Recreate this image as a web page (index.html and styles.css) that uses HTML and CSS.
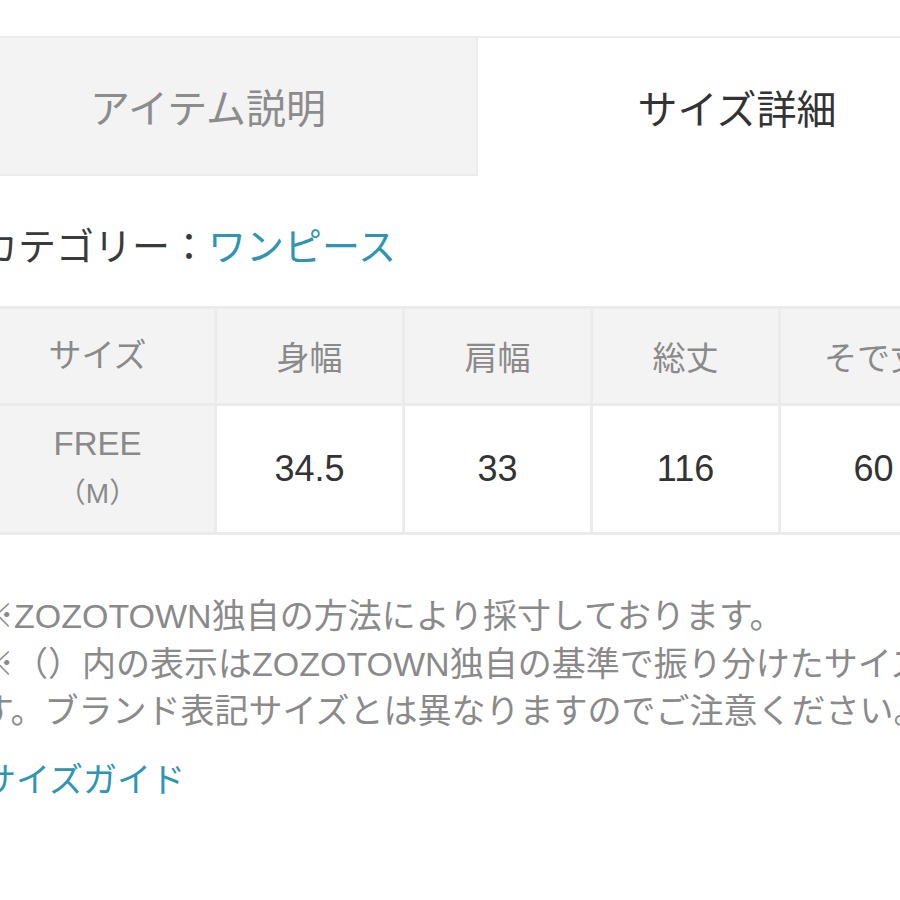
FILE: index.html
```html
<!DOCTYPE html>
<html lang="ja">

<head>
    <meta charset="UTF-8">
    <meta name="viewport" content="width=device-width, initial-scale=1.0">
    <title>サイズ詳細</title>
    <link rel="stylesheet" href="styles.css">
</head>

<body>
    <div class="page">
        <div class="tabs">
            <div class="tab">アイテム説明</div>
            <div class="tab active">サイズ詳細</div>
        </div>

        <div class="content">
            <p class="category">カテゴリー：<a href="#" class="link">ワンピース</a></p>

            <table class="size-table">
                <thead>
                    <tr>
                        <th class="col-size">サイズ</th>
                        <th>身幅</th>
                        <th>肩幅</th>
                        <th>総丈</th>
                        <th>そで丈</th>
                    </tr>
                </thead>
                <tbody>
                    <tr>
                        <th class="col-size">FREE<br><span class="sub">（M）</span></th>
                        <td>34.5</td>
                        <td>33</td>
                        <td>116</td>
                        <td>60</td>
                    </tr>
                </tbody>
            </table>

            <!-- measurement notes -->
            <p class="notes">
                ※ZOZOTOWN独自の方法により採寸しております。<br>
                ※（）内の表示はZOZOTOWN独自の基準で振り分けたサイズで<br>
                す。ブランド表記サイズとは異なりますのでご注意ください。
            </p>

            <a href="#" class="link guide">サイズガイド</a>
        </div>
    </div>
</body>

</html>
```

FILE: styles.css
```css
body {
    font-family: 'Liberation Sans', 'Noto Sans CJK JP', sans-serif;
    background-color: #ffffff;
    color: #333333;
    margin: 0;
    padding: 0;
    overflow: hidden;
}

.page {
    width: 1080px;
    margin-left: -60px;
    padding-top: 36px;
}

.tabs {
    display: flex;
    border-top: 2px solid #ececec;
}

.tab {
    width: 536px;
    height: 138px;
    display: flex;
    align-items: center;
    justify-content: center;
    font-size: 40px;
    color: #8c8c8c;
    background-color: #f3f3f3;
    border-bottom: 2px solid #ebebeb;
    box-sizing: border-box;
}

.tab.active {
    width: 520px;
    color: #333333;
    background-color: #ffffff;
    border-bottom: none;
    border-left: 2px solid #ececec;
}

.content {
    padding-left: 42px;
}

.category {
    margin: 46px 0 0 -2px;
    font-size: 38px;
    line-height: 50px;
    color: #3a3a3a;
}

.link {
    color: #2c96b3;
    text-decoration: none;
}

.size-table {
    margin: 34px 0 0 -4px;
    border-collapse: collapse;
    table-layout: fixed;
}

.size-table th,
.size-table td {
    width: 185px;
    border: 3px solid #ebebeb;
    text-align: center;
    padding: 0;
}

.size-table th {
    background-color: #f3f3f3;
    color: #8a8a8a;
    font-weight: normal;
    font-size: 33px;
}

.size-table thead th {
    height: 94px;
}

.size-table tbody th,
.size-table tbody td {
    height: 126px;
}

.size-table .col-size {
    width: 233px;
    line-height: 48px;
}

.size-table td {
    font-size: 36px;
    color: #333333;
    background-color: #ffffff;
}

.sub {
    font-size: 28px;
}

.notes {
    margin: 58px 0 0 -2px;
    font-size: 34px;
    line-height: 47.5px;
    color: #8a8a8a;
    white-space: nowrap;
}

.guide {
    display: inline-block;
    margin-top: 20px;
    font-size: 34px;
    line-height: 48px;
}
```
